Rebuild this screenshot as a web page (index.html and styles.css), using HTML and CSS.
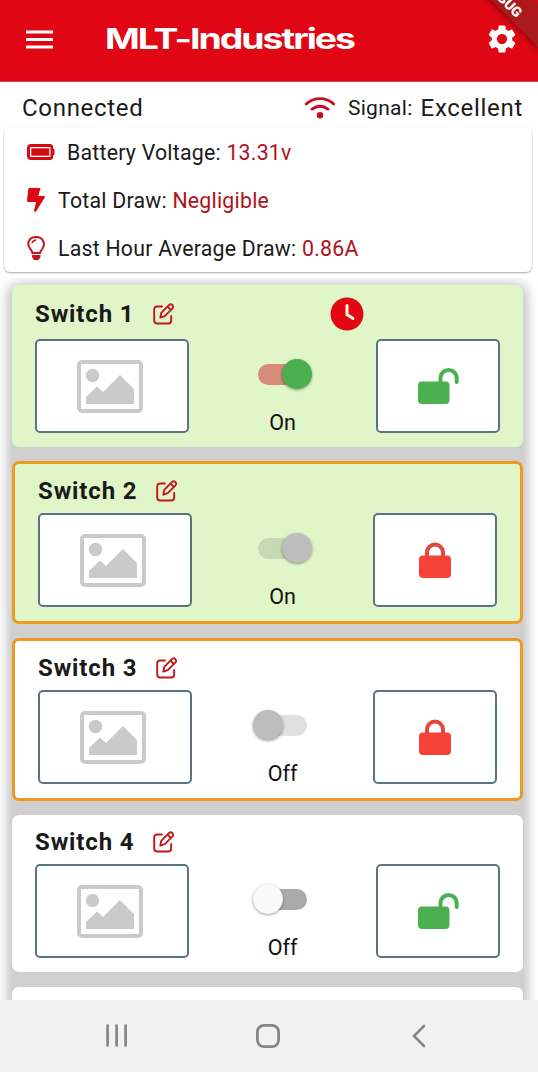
FILE: index.html
```html
<!DOCTYPE html>
<html lang="en">
<head>
<meta charset="utf-8">
<title>MLT-Industries</title>
<link rel="stylesheet" href="styles.css">
</head>
<body>
<svg class="defs" width="0" height="0" aria-hidden="true">
  <symbol id="edit" viewBox="0 0 22 22"><g fill="none" stroke="#c4161c" stroke-width="1.9" stroke-linecap="round" stroke-linejoin="round"><path d="M9 3.500H4.200Q1.200 3.500 1.200 6.500v11q0 3 3 3h11q3 0 3-3V13"/><path d="M7.300 14.600l1-4.800 7.800-7.900q1.700-1.400 3.300.2 1.500 1.600.1 3.200l-7.800 7.800zM14.700 3.700l3 3.200"/></g></symbol>
  <symbol id="image" viewBox="0 0 66 53"><rect x="2" y="2" width="62" height="49" rx="3" fill="none" stroke="#cacaca" stroke-width="4"/><circle cx="15.500" cy="15.500" r="6.700" fill="#cacaca"/><path d="M9 44V37l11-10.500 6 5.500L43 15l14 14v15z" fill="#cacaca"/></symbol>
  <symbol id="locked" viewBox="0 0 42 38"><path d="M8 17v-5.500a8 8 0 0 1 16 0V17" fill="none" stroke="#e2473c" stroke-width="4"/><rect x="0" y="14.500" width="32" height="22.500" rx="4" fill="#f44336"/></symbol>
  <symbol id="unlocked" viewBox="0 0 42 38"><path d="M22.500 17v-6a8 8 0 0 1 16.200 0v4" fill="none" stroke="#4caf50" stroke-width="4" stroke-linecap="round"/><rect x="0" y="14.500" width="31.500" height="22.500" rx="4" fill="#4caf50"/></symbol>
</svg>
<div class="screen">
  <header class="appbar">
    <svg class="menu" width="28" height="20" viewBox="0 0 28 20"><path d="M0 2h27M0 9.500h27M0 17h27" stroke="#fff" stroke-width="3"/></svg>
    <svg class="brand" width="256" height="36"><text x="-1" y="26.500" textLength="249" lengthAdjust="spacingAndGlyphs">MLT-Industries</text></svg>
    <svg class="gear" width="34" height="34" viewBox="0 0 24 24"><path fill="#fff" d="M19.140 12.940c.04-.3.060-.61.060-.94 0-.32-.02-.64-.07-.94l2.030-1.580c.18-.14.230-.41.120-.61l-1.920-3.320c-.12-.22-.37-.29-.59-.22l-2.390.960c-.5-.38-1.030-.7-1.620-.94l-.36-2.540c-.04-.24-.24-.41-.48-.41h-3.840c-.24 0-.43.170-.47.410l-.36 2.540c-.59.240-1.130.570-1.620.940l-2.390-.96c-.22-.08-.47 0-.59.220L2.740 8.870c-.12.210-.08.470.120.610l2.030 1.580c-.05.300-.09.630-.09.940s.02.640.070.940l-2.030 1.580c-.18.140-.23.410-.12.610l1.920 3.320c.12.220.370.290.590.220l2.390-.96c.5.380 1.030.700 1.620.940l.36 2.540c.05.240.240.410.480.410h3.840c.24 0 .44-.17.470-.41l.36-2.540c.59-.24 1.130-.56 1.620-.94l2.390.960c.22.080.470 0 .59-.22l1.920-3.320c.12-.22.070-.47-.12-.61l-2.010-1.580zM12 15.600c-1.980 0-3.600-1.620-3.600-3.600s1.620-3.600 3.600-3.600 3.600 1.620 3.600 3.600-1.620 3.600-3.600 3.600z"/></svg>
    <div class="banner">DEBUG</div>
  </header>
  <div class="status">
    <span class="state">Connected</span>
    <svg width="32" height="24" viewBox="0 0 32 24"><g fill="none" stroke="#c20f1b" stroke-width="2.800" stroke-linecap="round"><path d="M2.300 8Q8 2.600 16 2.600T29.700 8"/><path d="M8 13.200q8-6 16 0"/></g><circle cx="16" cy="19.300" r="3.200" fill="#c20f1b"/></svg>
    <span class="signal">Signal:</span>
    <span class="quality">Excellent</span>
  </div>
  <section class="stats">
    <div class="stat"><svg width="28" height="16" viewBox="0 0 28 16"><path fill="#d20a14" fill-rule="evenodd" d="M4 0h19q3 0 3 3v1.500q1.500.3 1.500 1.500v4q0 1.200-1.500 1.500V13q0 3-3 3H4q-4 0-4-4V4q0-4 4-4zM3 3v10h20.500V3z"/><path fill="#d20a14" d="M4.300 4.300h18v7.400h-18z"/></svg><span class="label">Battery Voltage: <b>13.31v</b></span></div>
    <div class="stat"><svg width="19" height="24" viewBox="0 0 19 24"><path fill="#de0812" d="M2.500 0h11l-2.200 8H17q1.500 0 .8 1.400L9 23.500q-2 .8-2-1L9 14H1.500Q0 14 0 12.500L1.300 1.200Q1.500 0 2.500 0z"/></svg><span class="label">Total Draw: <b>Negligible</b></span></div>
    <div class="stat"><svg width="19" height="24" viewBox="0 0 19 24"><path fill="none" stroke="#c9131c" stroke-width="2" d="M5.500 17Q5 14.500 3 12.500C-1 7 2.500 1 9 1s10 6 6.500 11.500q-2 2.500-2.500 4.500z"/><path fill="none" stroke="#c9131c" stroke-width="1.300" d="M5 7.500q.5-3 4-3.500"/><path fill="#c9131c" d="M5 19h8.500v2L11.500 24h-4.500L5 21z"/></svg><span class="label">Last Hour Average Draw: <b>0.86A</b></span></div>
  </section>
  <main class="list">
    <article class="card active timed">
      <div class="head"><h2>Switch 1</h2><svg class="edit" width="22" height="22"><use href="#edit"/></svg><svg class="clock" width="34" height="34" viewBox="0 0 34 34"><circle cx="17" cy="17" r="16.500" fill="#e30613"/><path d="M17 8.500v9l6 4" fill="none" stroke="#fff8df" stroke-width="3" stroke-linecap="round" stroke-linejoin="round"/></svg></div>
      <div class="row">
        <div class="box picture"><svg width="66" height="53"><use href="#image"/></svg></div>
        <div class="control"><div class="switch on"><i></i></div><span>On</span></div>
        <div class="box lock"><svg width="42" height="38"><use href="#unlocked"/></svg></div>
      </div>
    </article>
    <article class="card active guarded">
      <div class="head"><h2>Switch 2</h2><svg class="edit" width="22" height="22"><use href="#edit"/></svg></div>
      <div class="row">
        <div class="box picture"><svg width="66" height="53"><use href="#image"/></svg></div>
        <div class="control"><div class="switch on disabled"><i></i></div><span>On</span></div>
        <div class="box lock"><svg class="shut" width="32" height="38" viewBox="0 0 32 38"><use href="#locked" width="42" height="38"/></svg></div>
      </div>
    </article>
    <article class="card guarded">
      <div class="head"><h2>Switch 3</h2><svg class="edit" width="22" height="22"><use href="#edit"/></svg></div>
      <div class="row">
        <div class="box picture"><svg width="66" height="53"><use href="#image"/></svg></div>
        <div class="control"><div class="switch disabled"><i></i></div><span>Off</span></div>
        <div class="box lock"><svg class="shut" width="32" height="38" viewBox="0 0 32 38"><use href="#locked" width="42" height="38"/></svg></div>
      </div>
    </article>
    <article class="card">
      <div class="head"><h2>Switch 4</h2><svg class="edit" width="22" height="22"><use href="#edit"/></svg></div>
      <div class="row">
        <div class="box picture"><svg width="66" height="53"><use href="#image"/></svg></div>
        <div class="control"><div class="switch"><i></i></div><span>Off</span></div>
        <div class="box lock"><svg width="42" height="38"><use href="#unlocked"/></svg></div>
      </div>
    </article>
    <article class="card next"></article>
  </main>
  <nav class="navbar">
    <svg width="22" height="24" viewBox="0 0 22 24"><path d="M1.600 1.500v20M10.600 1.500v20M19.600 1.500v20" stroke="#858585" stroke-width="2.700" stroke-linecap="round"/></svg>
    <svg class="home" width="24" height="24" viewBox="0 0 24 24"><rect x="1.400" y="1.400" width="21.200" height="21.200" rx="6.500" fill="none" stroke="#858585" stroke-width="2.700"/></svg>
    <svg width="14" height="24" viewBox="0 0 14 24"><path d="M12 2L2 12l10 10" fill="none" stroke="#858585" stroke-width="2.600" stroke-linecap="round"/></svg>
  </nav>
</div>
</body>
</html>
```

FILE: styles.css
```css
* { box-sizing: border-box; }
body { margin: 0; font-family: Roboto, sans-serif; color: #1a1a1a; background: #fff; }
svg { display: block; flex: none; }
.defs { position: absolute; }
.screen { width: 538px; height: 1072px; display: flex; flex-direction: column; overflow: hidden; }

.appbar { position: relative; height: 82px; flex: none; display: flex; align-items: flex-start; background: #e10613; overflow: hidden; border-bottom: 1px solid #c9464b; }
.menu { margin: 30px 0 0 26px; }
.brand { margin: 22px 0 0 52px; overflow: visible; }
.brand text { font: 700 28px Inter, sans-serif; letter-spacing: -1.500px; fill: #fff; }
.gear { margin: 22px 0 0 123px; }
.banner { position: absolute; left: 444px; top: -11px; width: 120px; height: 20px; line-height: 20px; text-align: center; transform: rotate(45deg); background: #a91a1d; color: #fff; font-size: 14px; font-weight: 900; box-shadow: 0 -10px 0 #b0181b, 0 0 8px rgba(0, 0, 0, .5); }

.status { height: 45px; flex: none; display: flex; align-items: center; padding: 7px 15px 0 22px; white-space: nowrap; }
.state, .quality { font-size: 24px; line-height: 28px; letter-spacing: .7px; }
.state { margin-right: auto; }
.signal { font-size: 21px; letter-spacing: .3px; margin: 0 8px 0 12px; }

.stats { height: 145px; flex: none; margin: 0 6px 0 4px; padding: 1px 23px; border-radius: 6px; background: #fff; box-shadow: 0 1px 2px rgba(0, 0, 0, .35); }
.stat { height: 48px; display: flex; align-items: center; }
.label { font-size: 21.300px; letter-spacing: .23px; margin-left: 12px; padding-top: 1px; white-space: nowrap; }
.label b { font-weight: 400; color: #ae121c; }

.list { position: relative; isolation: isolate; margin-top: 6px; padding: 7px 15px 0 12px; flex: 1; min-height: 0; overflow: hidden; display: flex; flex-direction: column; gap: 14.400px; }
.list::before { content: ""; position: absolute; inset: 10px 15px -30px 12px; z-index: -1; border-radius: 8px; background: #cfcfcf; box-shadow: 0 0 12px 5px #c4c4c4; }
.card { flex: none; height: 157px; padding: 0 23px; border-radius: 7px; background: #fff; }
.active { background: #e0f6c8; }
.timed { height: 162px; }
.guarded { height: 162.500px; border: 3px solid #ec9a20; }
.head { height: 49px; display: flex; align-items: center; padding-top: 4px; }
.timed .head { height: 54px; }
.head h2 { margin: 0; font-size: 24px; line-height: 28px; font-weight: 700; letter-spacing: .85px; width: 118px; white-space: nowrap; }
.clock { margin-left: 155px; }
.row { display: flex; justify-content: space-between; }
.box { height: 94px; display: flex; align-items: center; justify-content: center; background: #fff; border: 2px solid #5b7580; border-radius: 5px; }
.picture { width: 154px; padding-right: 4px; }
.lock { width: 124px; }
.lock svg { margin-left: 1px; }
.lock .shut { margin-left: 0; }
.control { width: 60px; display: flex; flex-direction: column; align-items: center; padding-top: 20px; font-size: 21.500px; line-height: 26px; }
.control span { margin-top: 21px; color: #111; }
.switch { position: relative; width: 60px; height: 30px; display: flex; align-items: center; }
.switch::before { content: ""; position: absolute; left: 5.500px; top: 5px; width: 49px; height: 21px; border-radius: 11px; background: #aaa; }
.switch i { position: relative; width: 30px; height: 30px; border-radius: 50%; background: #fafafa; box-shadow: 0 1px 3px rgba(0, 0, 0, .4); }
.switch.on { justify-content: flex-end; }
.switch.on i { background: #4caf50; margin-right: 1px; }
.switch.on::before { background: #d58b78; }
.switch.disabled::before { background: #e0e0e0; }
.switch.on.disabled::before { background: #c7d9b2; }
.switch.disabled i { background: #bdbdbd; }

.navbar { height: 72px; flex: none; background: #f1f1f1; display: flex; align-items: center; justify-content: space-between; padding: 0 112px 0 106px; }
.home { margin-right: 5px; }
```
